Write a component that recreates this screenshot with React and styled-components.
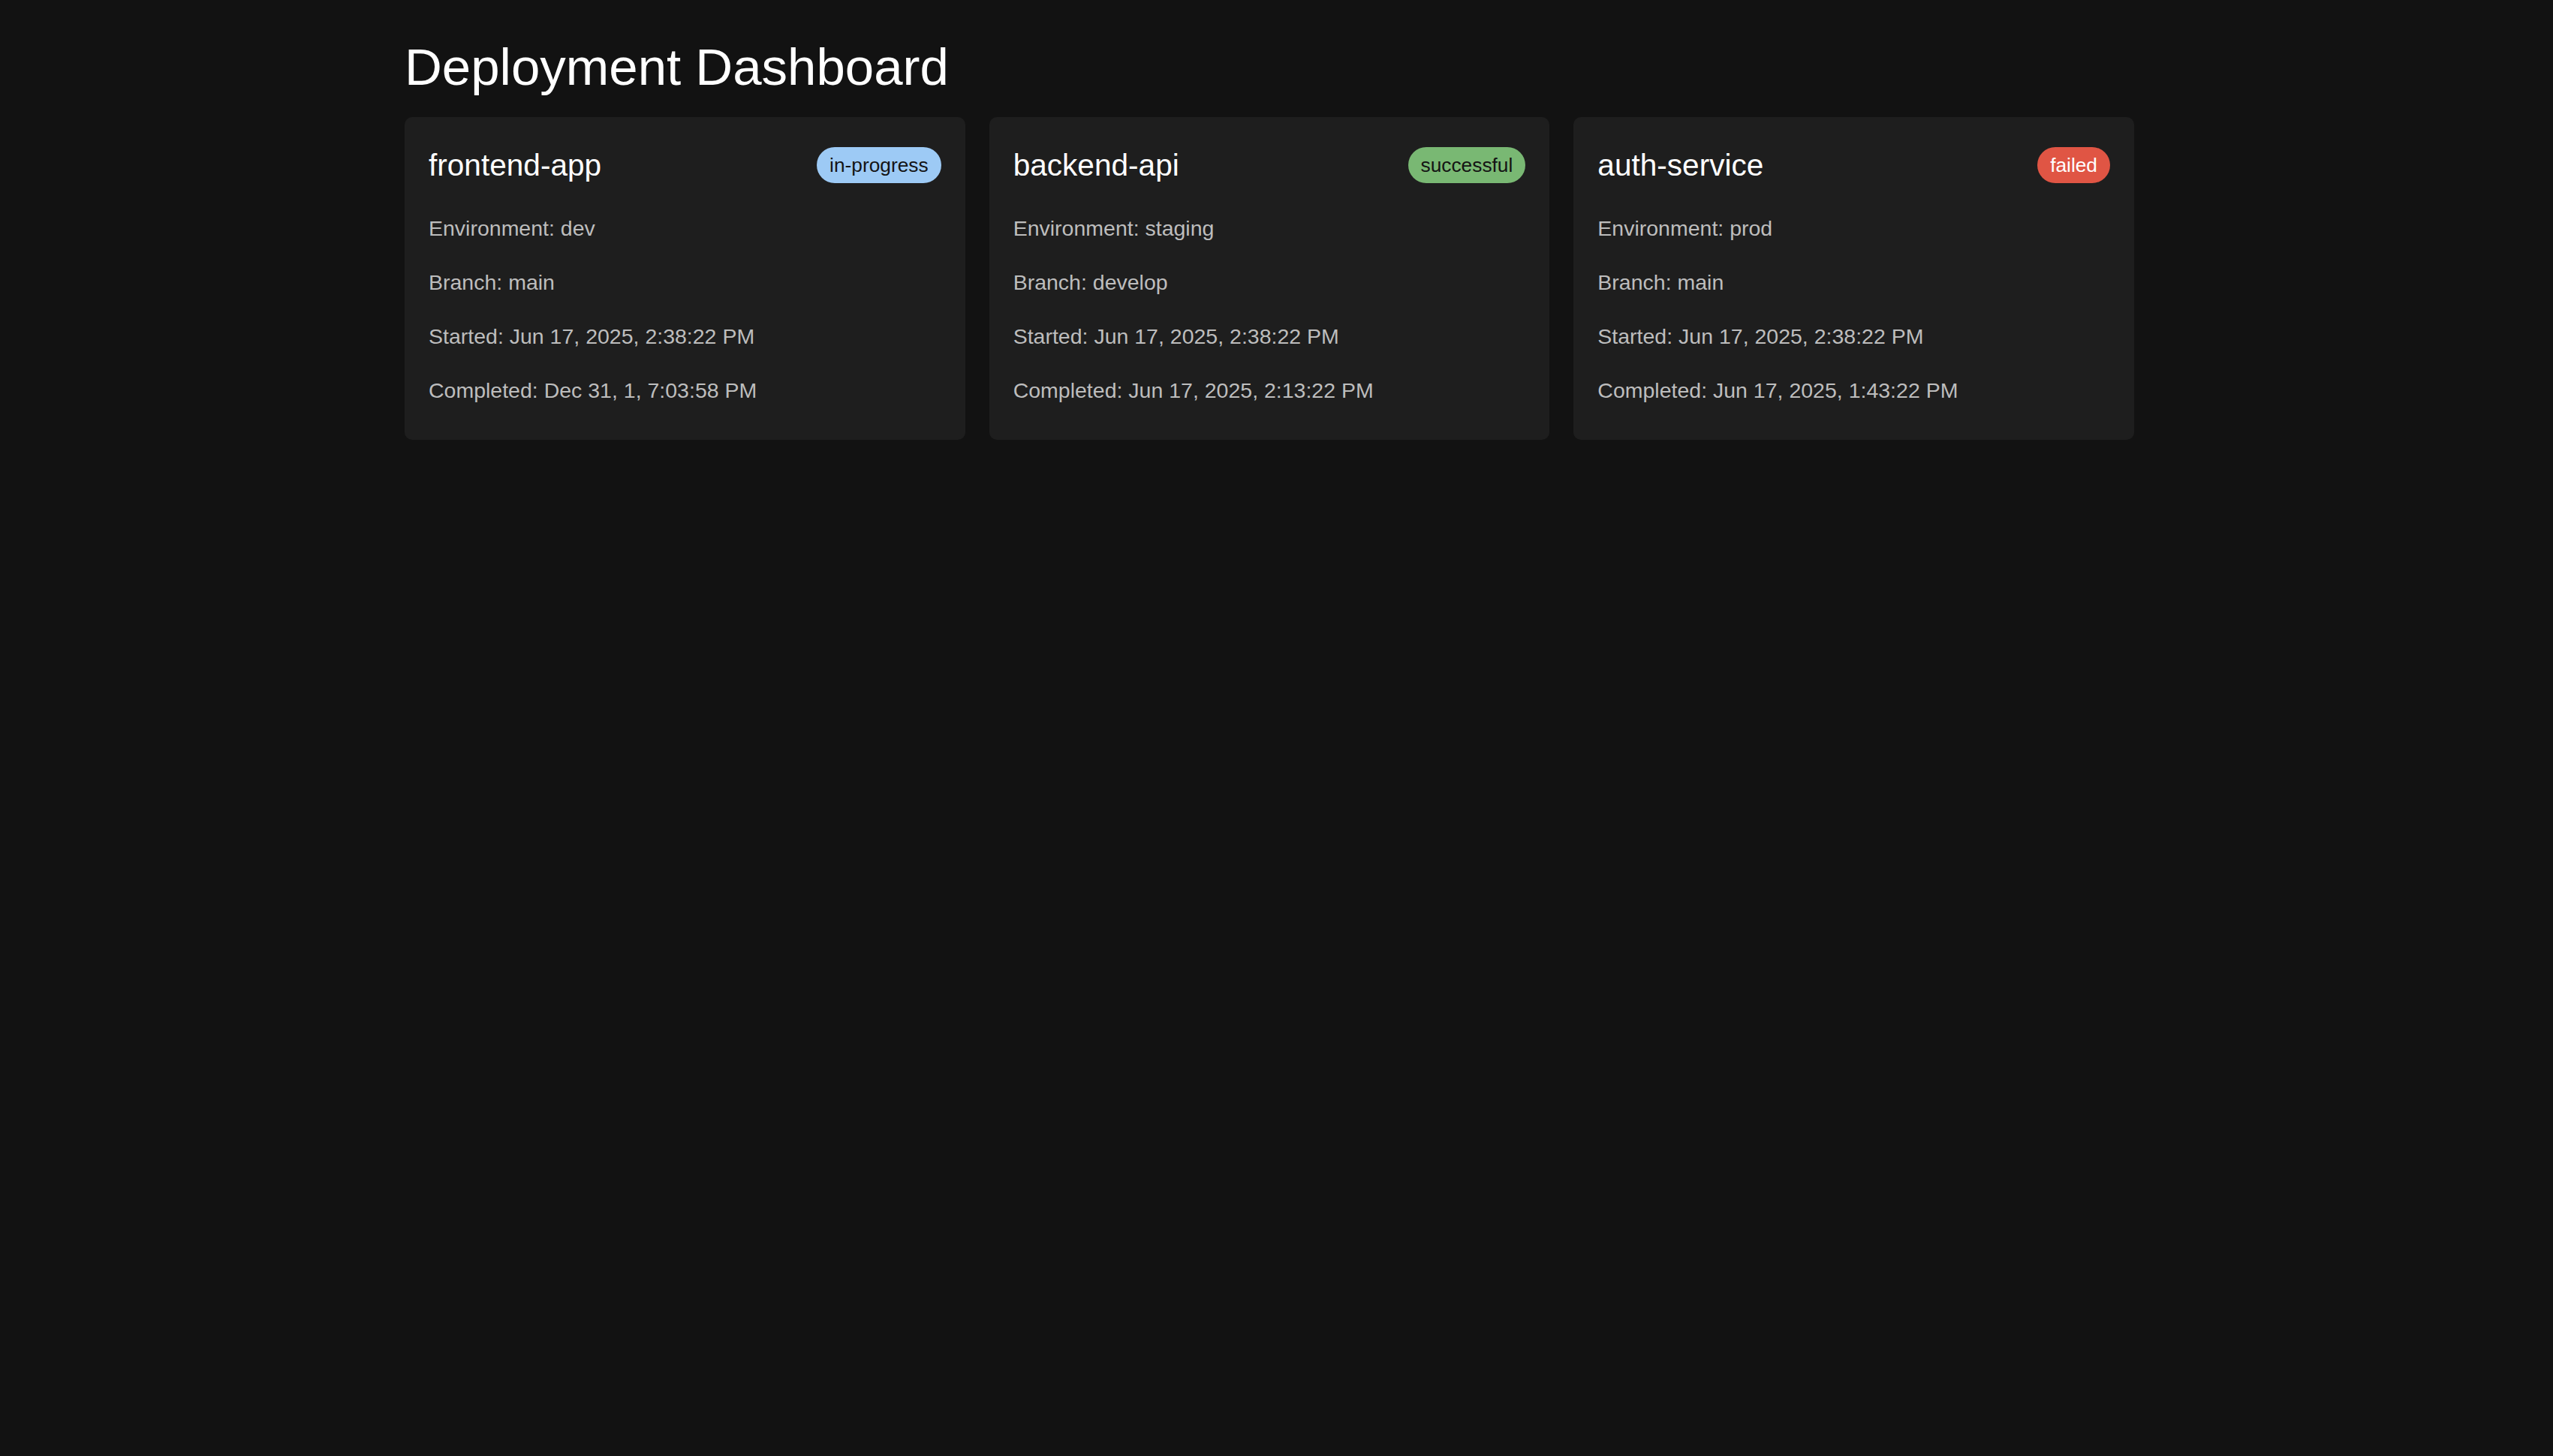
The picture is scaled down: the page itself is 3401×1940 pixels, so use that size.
import React from "react";
import styled, { createGlobalStyle } from "styled-components";

const GlobalStyle = createGlobalStyle`
    html, body {
        margin: 0;
        padding: 0;
        background: #121212;
    }
    body {
        font-family: "Liberation Sans", Arial, sans-serif;
        color: #fff;
    }
`;

const Page = styled.main`
    width: 2304px;
    margin: 0 0 0 539px;
    padding-top: 51px;
`;

const Title = styled.h1`
    margin: 0 0 27px;
    font-size: 69px;
    font-weight: 400;
    line-height: 78px;
    color: #fff;
`;

const Grid = styled.section`
    display: grid;
    grid-template-columns: repeat(3, 1fr);
    gap: 32px;
`;

const Card = styled.article`
    background: #1e1e1e;
    border-radius: 10px;
    padding: 40px 32px 50px;
`;

const CardHeader = styled.header`
    display: flex;
    align-items: center;
    justify-content: space-between;
    height: 48px;
    margin-bottom: 44px;
`;

const Name = styled.h2`
    margin: 0;
    font-size: 40.6px;
    font-weight: 400;
    color: #fff;
`;

const badgeColors = {
    "in-progress": { bg: "#9dcaf5", fg: "#141414" },
    successful: { bg: "#79b873", fg: "#141414" },
    failed: { bg: "#e05544", fg: "#fff" },
};

const Badge = styled.span`
    display: inline-block;
    padding: 9px 17px;
    border-radius: 24px;
    font-size: 26.3px;
    line-height: 30px;
    background: ${(p) => badgeColors[p.$status].bg};
    color: ${(p) => badgeColors[p.$status].fg};
`;

const Details = styled.div`
    display: flex;
    flex-direction: column;
    gap: 40px;
`;

const Line = styled.p`
    margin: 0;
    font-size: 28.5px;
    line-height: 32px;
    color: #bdbdbd;
`;

const deployments = [
    {
        name: "frontend-app",
        status: "in-progress",
        env: "dev",
        branch: "main",
        started: "Jun 17, 2025, 2:38:22 PM",
        completed: "Dec 31, 1, 7:03:58 PM",
    },
    {
        name: "backend-api",
        status: "successful",
        env: "staging",
        branch: "develop",
        started: "Jun 17, 2025, 2:38:22 PM",
        completed: "Jun 17, 2025, 2:13:22 PM",
    },
    {
        name: "auth-service",
        status: "failed",
        env: "prod",
        branch: "main",
        started: "Jun 17, 2025, 2:38:22 PM",
        completed: "Jun 17, 2025, 1:43:22 PM",
    },
];

const App = () => {
    return (
        <>
            <GlobalStyle />
            <Page>
                <Title>Deployment Dashboard</Title>
                <Grid>
                    {deployments.map((d) => (
                        <Card key={d.name}>
                            <CardHeader>
                                <Name>{d.name}</Name>
                                <Badge $status={d.status}>{d.status}</Badge>
                            </CardHeader>
                            <Details>
                                <Line>Environment: {d.env}</Line>
                                <Line>Branch: {d.branch}</Line>
                                <Line>Started: {d.started}</Line>
                                <Line>Completed: {d.completed}</Line>
                            </Details>
                        </Card>
                    ))}
                </Grid>
            </Page>
        </>
    );
};

export default App;
